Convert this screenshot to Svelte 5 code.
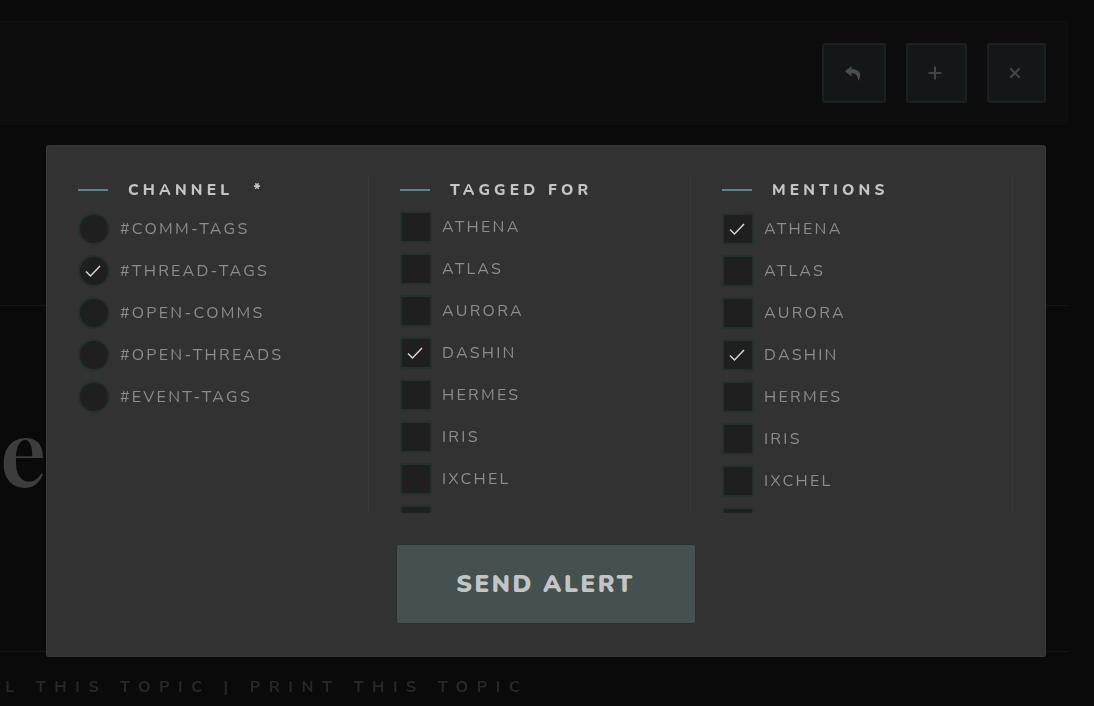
<script>
  const channels = [
    { name: "#COMM-TAGS", on: false },
    { name: "#THREAD-TAGS", on: true },
    { name: "#OPEN-COMMS", on: false },
    { name: "#OPEN-THREADS", on: false },
    { name: "#EVENT-TAGS", on: false }
  ];
  const people = ["ATHENA", "ATLAS", "AURORA", "DASHIN", "HERMES", "IRIS", "IXCHEL", "JANUS"];
  const tagged = ["DASHIN"];
  const mentions = ["ATHENA", "DASHIN"];
  const groups = [
    { title: "TAGGED FOR", picked: tagged, cls: "tagged" },
    { title: "MENTIONS", picked: mentions, cls: "mentions" }
  ];
</script>

{#snippet tick()}
  <svg class="tick" viewBox="0 0 16 16" width="16" height="16" aria-hidden="true">
    <path d="M1 8.5 L5.5 13 L15 3" />
  </svg>
{/snippet}

<div class="page">
  <div class="topbar">
    <button class="tool reply" aria-label="Reply">
      <svg viewBox="0 0 16 15" width="16" height="15" aria-hidden="true">
        <path d="M6.5 0 L0 5.2 L6.5 10.4 V7.2 C10.5 7.2 12.6 8.8 13.4 15 C16.6 9.5 16.4 3.2 6.5 3.2 Z" />
      </svg>
    </button>
    <button class="tool plus" aria-label="Add">
      <svg viewBox="0 0 14 14" width="14" height="14" aria-hidden="true"><path d="M7 0.5 V13.5 M0.5 7 H13.5" /></svg>
    </button>
    <button class="tool close" aria-label="Close">
      <svg viewBox="0 0 12 12" width="12" height="12" aria-hidden="true"><path d="M1.2 1.2 L10.8 10.8 M10.8 1.2 L1.2 10.8" /></svg>
    </button>
  </div>

  <hr class="rule first" />
  <div class="title">e</div>
  <hr class="rule last" />
  <p class="links">EMAIL THIS TOPIC | PRINT THIS TOPIC</p>

  <div class="modal">
    <div class="columns">
      <section class="col">
        <h3><span class="dash"></span>CHANNEL<span class="req">*</span></h3>
        <ul>
          {#each channels as c}
            <li>
              <span class="box round">{#if c.on}{@render tick()}{/if}</span>
              <span class="label">{c.name}</span>
            </li>
          {/each}
        </ul>
      </section>

      {#each groups as g}
        <section class="col {g.cls}">
          <h3><span class="dash"></span>{g.title}</h3>
          <ul>
            {#each people as p}
              <li>
                <span class="box">{#if g.picked.includes(p)}{@render tick()}{/if}</span>
                <span class="label">{p}</span>
              </li>
            {/each}
          </ul>
        </section>
      {/each}
    </div>
    <button class="send">SEND ALERT</button>
  </div>
</div>

<style>
  :global(body) {
    background: #0a0a0a;
  }

  .page {
    position: relative;
    height: 706px;
    overflow: hidden;
    box-sizing: border-box;
    padding-top: 21px;
    font-family: "Nunito", "Lato", "Liberation Sans", sans-serif;
    /* own layer, so the text is smoothed in grey as in the dimmed original */
    will-change: opacity;
  }

  .topbar {
    display: flex;
    justify-content: flex-end;
    align-items: center;
    gap: 20px;
    height: 104px;
    box-sizing: border-box;
    margin-right: 26px;
    padding-right: 21px;
    background: #0d0d0d;
    border: 1px solid #101212;
    border-left: 0;
    border-radius: 0 3px 3px 0;
  }

  .tool {
    height: 60px;
    padding: 0;
    display: flex;
    align-items: center;
    justify-content: center;
    background: #141718;
    border: 2px solid #1a2120;
    border-radius: 3px;
  }

  .reply { width: 64px; }
  .reply svg { fill: #4c4c4c; margin-right: 2px; }
  .plus { width: 61px; }
  .plus svg, .close svg { fill: none; stroke: #444444; stroke-width: 2; margin-right: 4px; }
  .close { width: 59px; }

  .rule {
    height: 0;
    margin: 0 26px 0 0;
    border: 0;
    border-top: 1px solid #111817;
  }

  .first { margin-top: 180px; }
  .last { margin-top: 20px; }

  .title {
    height: 325px;
    font-family: "Playfair Display", "Liberation Serif", serif;
    font-size: 92px;
    font-weight: 600;
    line-height: 286px;
    color: #3d3d3d;
  }

  .links {
    margin: 25px 0 0 -69px;
    font-size: 16px;
    font-weight: 700;
    line-height: 20px;
    letter-spacing: 8.6px;
    white-space: nowrap;
    color: #282828;
  }

  .modal {
    position: absolute;
    left: 46px;
    top: 145px;
    width: 1000px;
    height: 512px;
    box-sizing: border-box;
    padding: 31px 32px 0 31px;
    background: #323232;
    border: 1px solid #3b3b3b;
    border-top-color: #363636;
    border-radius: 3px;
    display: flex;
    flex-direction: column;
    align-items: center;
  }

  .columns {
    display: grid;
    grid-template-columns: repeat(3, 291px);
    column-gap: 31px;
    width: 100%;
    height: 336px;
    overflow: hidden;
  }

  .col {
    border-right: 1px solid #3a3a3a;
    overflow: hidden;
  }

  h3 {
    display: flex;
    align-items: center;
    margin: 4px 0 0;
    height: 17px;
    font-size: 15.5px;
    font-weight: 800;
    line-height: 17px;
    letter-spacing: 4.2px;
    color: #c4c4c4;
  }

  .dash {
    width: 30px;
    height: 2px;
    margin-right: 20px;
    background: #5f8387;
  }

  .req {
    margin-left: 20px;
  }

  ul {
    list-style: none;
    margin: 15px 0 0;
    padding: 0;
    display: flex;
    flex-direction: column;
    gap: 10px;
  }

  .tagged ul {
    margin-top: 13px;
  }

  li {
    display: flex;
    align-items: center;
    gap: 10px;
    height: 32px;
  }

  .box {
    flex: none;
    box-sizing: border-box;
    width: 32px;
    height: 32px;
    display: flex;
    align-items: center;
    justify-content: center;
    background: #1f1f1f;
    border: 2px solid #253030;
    border-radius: 3px;
  }

  .round {
    border-radius: 50%;
  }

  .tick {
    margin: 0 2px 0 0;
    fill: none;
    stroke: #d4d4d4;
    stroke-width: 1.5;
  }

  .label {
    font-size: 16px;
    font-weight: 400;
    letter-spacing: 2.25px;
    color: #8c8c8c;
  }

  .send {
    width: 300px;
    height: 80px;
    margin-top: 31px;
    background: #445150;
    border: 1px solid #2c3030;
    border-radius: 3px;
    font-family: inherit;
    font-size: 24px;
    font-weight: 900;
    letter-spacing: 2.5px;
    color: #c4c4c4;
    will-change: opacity;
  }
</style>
